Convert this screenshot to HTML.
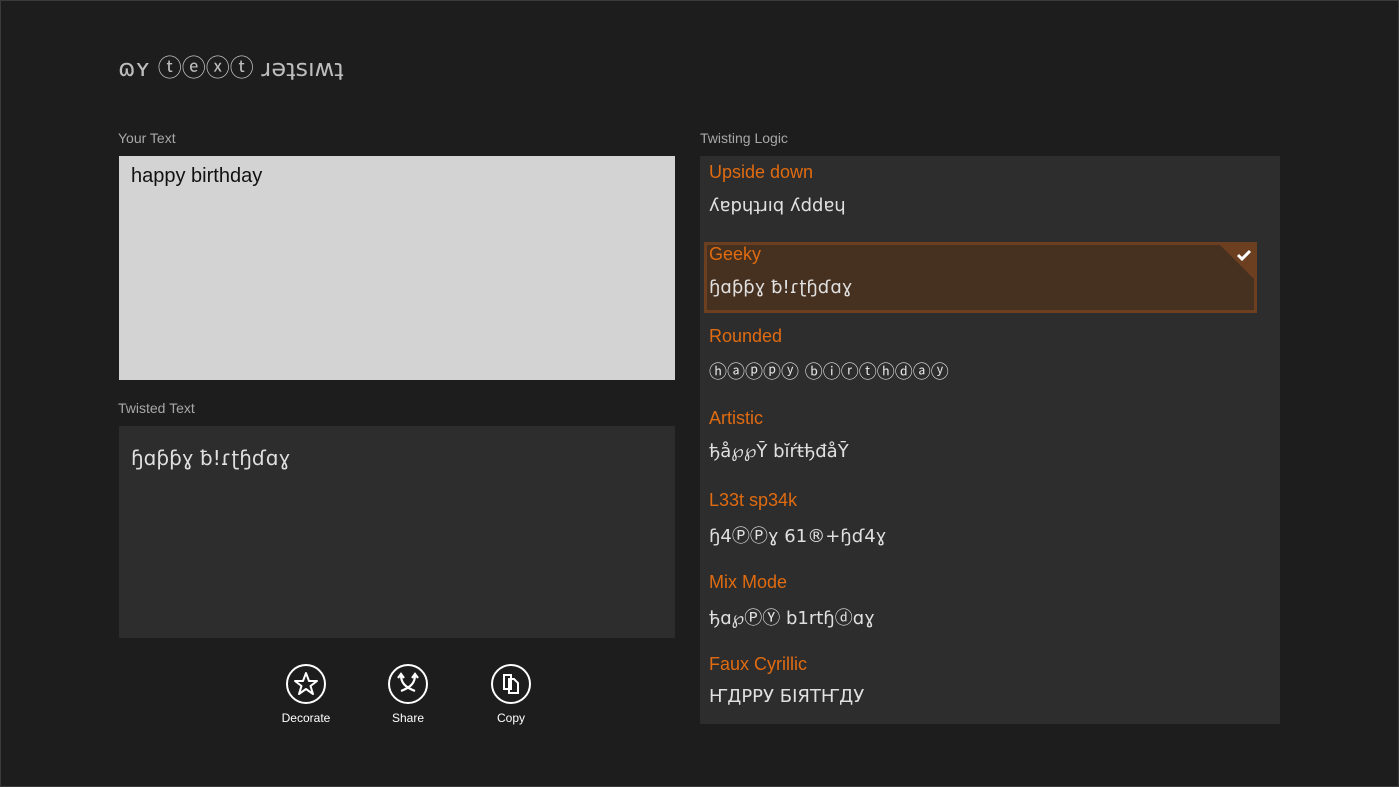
<!DOCTYPE html>
<html><head><meta charset="utf-8"><style>
body{margin:0;width:1399px;height:787px;background:#1d1d1d;font-family:"Segoe UI","Liberation Sans","DejaVu Sans",sans-serif;overflow:hidden;position:relative;color:#ddd}
.a{position:absolute}
.lbl{font-size:14px;color:#a8a8a8}
.t{color:#e06b10;font-size:18px}
.v{color:#e0e0e0;font-size:18px;font-family:"DejaVu Sans","Liberation Sans",sans-serif}
.btn{position:absolute;top:663px;width:80px;text-align:center;font-size:12px;color:#fff}
.btn svg{display:block;margin:0 auto 6px}
</style></head><body>
<div class="a" style="left:0;top:0;width:1397px;height:785px;border:1px solid #3a3a3a"></div>
<div class="a" style="left:118px;top:48px;font-size:24px;color:#bdbdbd;font-family:'DejaVu Sans',sans-serif">ɷʏ ⓣⓔⓧⓣ ɹǝʇsıʍʇ</div>
<div class="a lbl" style="left:118px;top:130px">Your Text</div>
<div class="a" style="left:119px;top:156px;width:556px;height:224px;background:#d3d3d3;color:#111;font-size:20px"><div style="padding:9px 12px">happy birthday</div></div>
<div class="a lbl" style="left:118px;top:400px">Twisted Text</div>
<div class="a" style="left:119px;top:426px;width:556px;height:212px;background:#2d2d2d"><div class="v" style="padding:20px 12px;font-size:20px">ɧɑƥƥɣ ƀ!ɾʈɧɗɑɣ</div></div>
<div class="btn" style="left:266px"><svg width="42" height="42" viewBox="0 0 42 42"><circle cx="21" cy="21" r="19" fill="none" stroke="#fff" stroke-width="2"/><path d="M21 10l3 8h8l-6.5 5 2.5 8-7-5-7 5 2.5-8L10 18h8z" fill="none" stroke="#fff" stroke-width="2" stroke-linejoin="round"/></svg>Decorate</div>
<div class="btn" style="left:368px"><svg width="42" height="42" viewBox="0 0 42 42"><circle cx="21" cy="21" r="19" fill="none" stroke="#fff" stroke-width="2"/><path d="M14 12c0 8 4 12 14 16M28 12c0 8-4 12-14 16M11 15l3-4 3 4M25 15l3-4 3 4" fill="none" stroke="#fff" stroke-width="2.2"/></svg>Share</div>
<div class="btn" style="left:471px"><svg width="42" height="42" viewBox="0 0 42 42"><circle cx="21" cy="21" r="19" fill="none" stroke="#fff" stroke-width="2"/><path d="M14 12h7v14h-7zM19 16h5l4 4v10h-9z" fill="none" stroke="#fff" stroke-width="2"/></svg>Copy</div>
<div class="a lbl" style="left:700px;top:130px">Twisting Logic</div>
<div class="a" style="left:700px;top:156px;width:580px;height:568px;background:#2d2d2d"></div>
<div class="a" style="left:704px;top:242px;width:547px;height:65px;background:#46301f;border:3px solid #6b3f1f"></div>
<svg class="a" style="left:1220px;top:245px" width="34" height="34"><polygon points="0,0 34,0 34,34" fill="#6b3f1f"/><path d="M18 10l4 4 8-8" fill="none" stroke="#fff" stroke-width="3"/></svg>
<div class="a t" style="left:709px;top:162px">Upside down</div><div class="a v" style="left:709px;top:195px">ʎɐpɥʇɹıq ʎddɐɥ</div>
<div class="a t" style="left:709px;top:244px">Geeky</div><div class="a v" style="left:709px;top:277px">ɧɑƥƥɣ ƀ!ɾʈɧɗɑɣ</div>
<div class="a t" style="left:709px;top:326px">Rounded</div><div class="a v" style="left:709px;top:358px">ⓗⓐⓟⓟⓨ ⓑⓘⓡⓣⓗⓓⓐⓨ</div>
<div class="a t" style="left:709px;top:408px">Artistic</div><div class="a v" style="left:709px;top:441px">ђå℘℘Ȳ bĭŕŧђđåȲ</div>
<div class="a t" style="left:709px;top:490px">L33t sp34k</div><div class="a v" style="left:709px;top:522px">ɧ4ⓅⓅɣ 61®+ɧɗ4ɣ</div>
<div class="a t" style="left:709px;top:572px">Mix Mode</div><div class="a v" style="left:709px;top:604px">ђɑ℘ⓅⓎ b1rtɧⓓɑɣ</div>
<div class="a t" style="left:709px;top:654px">Faux Cyrillic</div><div class="a v" style="left:709px;top:686px">ҤДРРУ БІЯТҤДУ</div>
</body></html>
